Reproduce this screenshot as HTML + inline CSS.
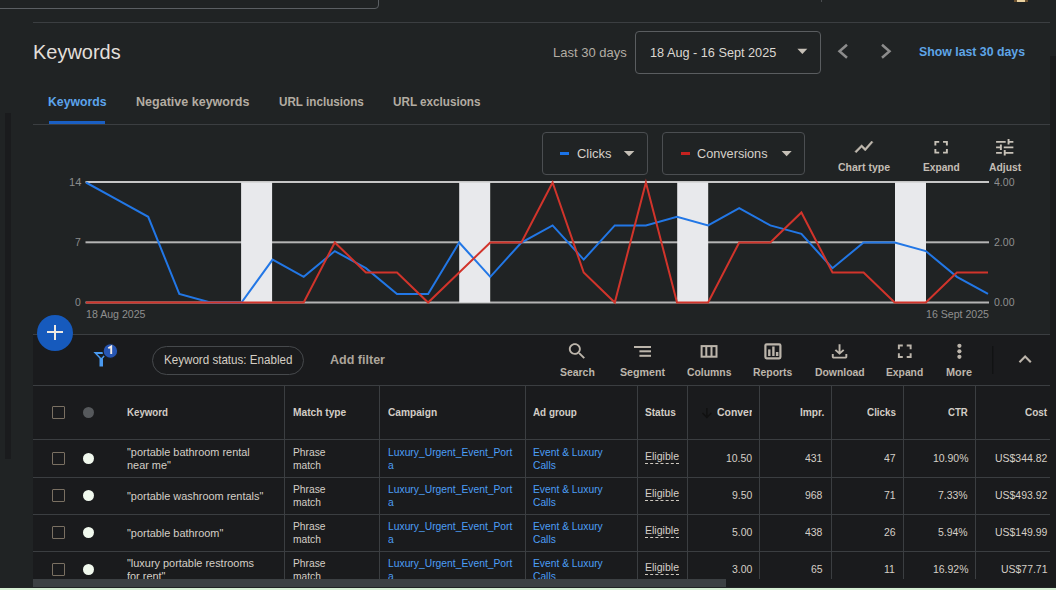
<!DOCTYPE html>
<html><head><meta charset="utf-8">
<style>
html,body{margin:0;padding:0;}
body{width:1056px;height:590px;overflow:hidden;background:#202324;position:relative;font-family:"Liberation Sans",sans-serif;}
.a{position:absolute;box-sizing:border-box;}
.t{position:absolute;white-space:nowrap;line-height:1;transform-origin:0 0;font-family:"Liberation Sans",sans-serif;}
.hl{position:absolute;height:1px;background:#3b3e41;}
.vl{position:absolute;width:1px;background:#3b3e41;}
.cb{position:absolute;width:13px;height:13px;box-sizing:border-box;border:1.4px solid #7a7062;border-radius:1px;}
.dot{position:absolute;width:11px;height:11px;border-radius:50%;background:#f1f9ee;}
.ul{position:absolute;height:1px;border-top:1px dashed #cfc9c0;}
</style></head><body>
<!-- top remnants -->
<div class="a" style="left:-10px;top:-20px;width:389px;height:29px;border:1.5px solid #5b5f63;border-radius:4px;"></div>
<div class="a" style="left:821px;top:0;width:1.2px;height:2px;background:#4a4d50;"></div>
<div class="a" style="left:1014px;top:0;width:13.5px;height:1.5px;background:#6a5030;"></div><div class="a" style="left:1016.5px;top:0;width:8px;height:2.2px;background:#ead2a0;"></div>
<div class="hl" style="left:33px;top:22px;width:1017px;background:#3b3e41;"></div>
<!-- left dark bar -->
<div class="a" style="left:4.5px;top:113px;width:6.5px;height:346px;background:#1a1b1d;"></div>
<!-- right strip -->
<div class="a" style="left:1050px;top:56px;width:6px;height:534px;background:#1a1b1c;"></div>

<!-- date box -->
<div class="a" style="left:635px;top:31px;width:186px;height:43px;border:1px solid #5a5d60;border-radius:4px;"></div>
<svg class="a" style="left:0;top:0" width="1056" height="590">
  <!-- dropdown triangle -->
  <path d="M797.4,48.8 L807.3,48.8 L802.35,54.1 Z" fill="#c6c0b7"/>
  <!-- chevrons -->
  <path d="M847,44.8 L839.5,51.3 L847,57.8" fill="none" stroke="#8c8c8c" stroke-width="2.5"/>
  <path d="M882,44.8 L889.5,51.3 L882,57.8" fill="none" stroke="#8c8c8c" stroke-width="2.5"/>
</svg>

<!-- tabs -->
<div class="a" style="left:49px;top:121px;width:56px;height:3px;background:#1a5fc3;"></div>
<div class="hl" style="left:33px;top:124px;width:1017px;"></div>

<!-- chart buttons -->
<div class="a" style="left:542px;top:132px;width:106px;height:43px;border:1px solid #4b4e51;border-radius:4px;"></div>
<div class="a" style="left:662px;top:132px;width:143px;height:43px;border:1px solid #4b4e51;border-radius:4px;"></div>
<div class="a" style="left:560px;top:152px;width:9px;height:3px;background:#1a73e8;"></div>
<div class="a" style="left:681px;top:152px;width:9px;height:3px;background:#c5221f;"></div>
<svg class="a" style="left:0;top:0" width="1056" height="590">
  <path d="M623.8,151 L634.4,151 L629.1,156.3 Z" fill="#c6c0b7"/>
  <path d="M781.6,151 L791.7,151 L786.65,156.3 Z" fill="#c6c0b7"/>
  <!-- chart type icon -->
  <path transform="translate(853.1,136) scale(0.9,0.91)" d="M3.5 18.49l6-6.01 4 4L22 6.92l-1.41-1.41-7.09 7.97-4-4L2 16.99z" fill="#c0b9af" stroke="#c0b9af" stroke-width="0.5"/>
  <path transform="translate(929.6,136.5) scale(0.96,0.9)" d="M7 14H5v5h5v-2H7v-3zm-2-4h2V7h3V5H5v5zm12 7h-3v2h5v-5h-2v3zM14 5v2h3v3h2V5h-5z" fill="#c8c2b8"/>
  <path transform="translate(993.2,136.3) scale(0.96,0.92)" d="M3 17v2h6v-2H3zM3 5v2h10V5H3zm10 16v-2h8v-2h-8v-2h-2v6h2zM7 9v2H3v2h4v2h2V9H7zm14 4v-2H11v2h10zm-6-4h2V7h4V5h-4V3h-2v6z" fill="#c8c2b8"/>
</svg>

<!-- plot -->
<svg class="a" style="left:0;top:0" width="1056" height="590">
  <rect x="85.5" y="181" width="903.5" height="2" fill="#c6c6c6"/>
  <rect x="85.5" y="241.3" width="903.5" height="2" fill="#b4b4b4"/>
  <rect x="85.5" y="301.5" width="903.5" height="2" fill="#b4b4b4"/>
  <g fill="#e8e9ec">
    <rect x="241.1" y="182.5" width="31" height="120"/>
    <rect x="459.2" y="182.5" width="31" height="120"/>
    <rect x="677.2" y="182.5" width="31" height="120"/>
    <rect x="895" y="182.5" width="31" height="120"/>
  </g>
  <polyline fill="none" stroke="#2277e6" stroke-width="2" stroke-linejoin="miter" points="86.0,182.5 117.1,199.6 148.2,216.8 179.3,293.9 210.4,302.5 241.5,302.5 272.6,259.6 303.7,276.8 334.8,251.1 365.9,268.2 397.0,293.9 428.1,293.9 459.2,242.5 490.3,276.8 521.4,242.5 552.6,225.4 583.7,259.6 614.8,225.4 645.9,225.4 677.0,216.8 708.1,225.4 739.2,208.2 770.3,225.4 801.4,233.9 832.5,268.2 863.6,242.5 894.7,242.5 925.8,251.1 956.9,276.8 988.0,293.9"/>
  <polyline fill="none" stroke="#d1342b" stroke-width="2" stroke-linejoin="miter" points="86.0,302.5 117.1,302.5 148.2,302.5 179.3,302.5 210.4,302.5 241.5,302.5 272.6,302.5 303.7,302.5 334.8,242.5 365.9,272.5 397.0,272.5 428.1,302.5 459.2,272.5 490.3,242.5 521.4,242.5 552.6,182.5 583.7,272.5 614.8,302.5 645.9,182.5 677.0,302.5 708.1,302.5 739.2,242.5 770.3,242.5 801.4,212.5 832.5,272.5 863.6,272.5 894.7,302.5 925.8,302.5 956.9,272.5 988.0,272.5"/>
</svg>

<!-- table card -->
<div class="a" style="left:33px;top:334px;width:1017px;height:254px;background:#1a1b1d;"></div>
<div class="hl" style="left:33px;top:334px;width:1017px;"></div>
<div class="hl" style="left:33px;top:385px;width:1017px;"></div>
<div class="hl" style="left:33px;top:439px;width:1017px;"></div>
<div class="hl" style="left:33px;top:477px;width:1017px;"></div>
<div class="hl" style="left:33px;top:514px;width:1017px;"></div>
<div class="hl" style="left:33px;top:551px;width:1017px;"></div>
<div class="vl" style="left:284px;top:385px;height:194px;"></div>
<div class="vl" style="left:379px;top:385px;height:194px;"></div>
<div class="vl" style="left:525px;top:385px;height:194px;"></div>
<div class="vl" style="left:637px;top:385px;height:194px;"></div>
<div class="vl" style="left:687px;top:385px;height:194px;"></div>
<div class="vl" style="left:759px;top:385px;height:194px;"></div>
<div class="vl" style="left:831px;top:385px;height:194px;"></div>
<div class="vl" style="left:903px;top:385px;height:194px;"></div>
<div class="vl" style="left:975px;top:385px;height:194px;"></div>
<!-- FAB -->
<div class="a" style="left:37px;top:315px;width:36px;height:36px;border-radius:50%;background:#165abd;"></div>
<div class="a" style="left:46.9px;top:331px;width:15.8px;height:2.3px;background:#eee9e2;"></div>
<div class="a" style="left:53.6px;top:325.2px;width:2.3px;height:14.6px;background:#eee9e2;"></div>

<!-- filter icon -->
<svg class="a" style="left:0;top:0" width="1056" height="590">
  <path d="M93.4,351.9 H109 L101.2,360.2 Z M97.3,354 L101.2,358 L105.1,354 Z" fill="#4a9af0" fill-rule="evenodd"/>
  <rect x="99.5" y="358.3" width="3.5" height="8.2" fill="#4a9af0"/>
  <circle cx="110.4" cy="351" r="7.4" fill="#2756b3" stroke="#1b1c1e" stroke-width="1.3"/>
  <path d="M108.3,348.3 L111.2,346.4 V353.9" fill="none" stroke="#f4ece6" stroke-width="1.9"/>
</svg>
<div class="a" style="left:152px;top:346px;width:152px;height:29px;border:1px solid #46494c;border-radius:15px;"></div>

<!-- toolbar icons -->
<svg class="a" style="left:0;top:0" width="1056" height="590">
  <g fill="#bcb5ab">
    <path transform="translate(566.1,340.7) scale(0.92,0.88)" d="M15.5 14h-.79l-.28-.27C15.41 12.59 16 11.11 16 9.5 16 5.91 13.09 3 9.5 3S3 5.91 3 9.5 5.91 16 9.5 16c1.61 0 3.09-.59 4.23-1.57l.27.28v.79l5 4.99L20.49 19l-4.99-5zm-6 0C7.01 14 5 11.99 5 9.5S7.01 5 9.5 5 14 7.01 14 9.5 11.99 14 9.5 14z"/>
    <rect x="634" y="346" width="17" height="2"/>
    <rect x="639.4" y="350.3" width="11.6" height="2"/>
    <rect x="639.4" y="354.8" width="11.6" height="2"/>
    <path transform="translate(827.93,361.96) scale(0.0242,0.0222)" d="M480-320 280-520l56-58 104 104v-326h80v326l104-104 56 58-200 200ZM240-160q-33 0-56.5-23.5T160-240v-120h80v120h480v-120h80v120q0 33-23.5 56.5T720-160H240Z"/>
    <path transform="translate(893,339.85) scale(0.98,0.95)" d="M7 14H5v5h5v-2H7v-3zm-2-4h2V7h3V5H5v5zm12 7h-3v2h5v-5h-2v3zM14 5v2h3v3h2V5h-5z"/>
    <path transform="translate(1012.3,346.3) scale(1.07,1.08)" d="M12 8l-6 6 1.41 1.41L12 10.83l4.59 4.58L18 14z"/>
    <rect x="768.1" y="349.4" width="2.4" height="6.6"/>
    <rect x="772.2" y="346.5" width="2.4" height="9.5"/>
    <rect x="775.9" y="352" width="2.5" height="4"/>
    <circle cx="959.4" cy="345.8" r="2.1"/>
    <circle cx="959.4" cy="351.3" r="2.1"/>
    <circle cx="959.4" cy="356.8" r="2.1"/>
  </g>
  <g stroke="#bcb5ab" fill="none" stroke-width="2">
    <rect x="701.6" y="346.1" width="14.9" height="10.6"/>
    <path d="M706.3,346 V357 M711.5,346 V357"/>
    <rect x="765.4" y="344.3" width="15" height="14" stroke-width="2.2" rx="1.2"/>
  </g>
  <rect x="992.3" y="346" width="1" height="28" fill="#0f1011"/>
</svg>

<!-- table header icons -->
<div class="cb" style="left:52px;top:406px;"></div>
<div class="a" style="left:82.7px;top:407px;width:11px;height:11px;border-radius:50%;background:#56595c;"></div>
<svg class="a" style="left:0;top:0" width="1056" height="590">
  <path d="M706.9,408 V417.5 M702.5,413 L706.9,417.5 L711.3,413" fill="none" stroke="#111" stroke-width="1.5"/>
</svg>

<!-- rows icons -->
<div class="cb" style="left:52px;top:452px;"></div>
<div class="dot" style="left:82.8px;top:453.3px;"></div>
<div class="cb" style="left:52px;top:489px;"></div>
<div class="dot" style="left:82.8px;top:490.3px;"></div>
<div class="cb" style="left:52px;top:526px;"></div>
<div class="dot" style="left:82.8px;top:527.3px;"></div>
<div class="cb" style="left:52px;top:563px;"></div>
<div class="dot" style="left:82.8px;top:564.3px;"></div>
<div class="ul" style="left:645px;top:463px;width:34px;"></div>
<div class="ul" style="left:645px;top:500px;width:34px;"></div>
<div class="ul" style="left:645px;top:537px;width:34px;"></div>
<div class="ul" style="left:645px;top:574px;width:34px;"></div>

<div class="t" style="left:32.90px;top:41.77px;font-size:20px;font-weight:400;color:#e2dfda;transform:scaleX(0.9976)">Keywords</div>
<div class="t" style="left:553.10px;top:46.14px;font-size:13.3px;font-weight:400;color:#b3ada4;transform:scaleX(0.9774)">Last 30 days</div>
<div class="t" style="left:650.30px;top:46.14px;font-size:13.3px;font-weight:400;color:#dcd8d2;transform:scaleX(0.9543)">18 Aug - 16 Sept 2025</div>
<div class="t" style="left:918.60px;top:45.04px;font-size:13.3px;font-weight:700;color:#5ea5e8;transform:scaleX(0.9253)">Show last 30 days</div>
<div class="t" style="left:47.50px;top:95.00px;font-size:13.7px;font-weight:700;color:#5ca4ec;transform:scaleX(0.8942)">Keywords</div>
<div class="t" style="left:135.50px;top:95.00px;font-size:13.7px;font-weight:700;color:#b3aca2;transform:scaleX(0.9152)">Negative keywords</div>
<div class="t" style="left:278.60px;top:95.00px;font-size:13.7px;font-weight:700;color:#b3aca2;transform:scaleX(0.8533)">URL inclusions</div>
<div class="t" style="left:392.50px;top:95.00px;font-size:13.7px;font-weight:700;color:#b3aca2;transform:scaleX(0.8542)">URL exclusions</div>
<div class="t" style="left:576.60px;top:147.10px;font-size:13px;font-weight:400;color:#d5d0c9;transform:scaleX(0.9950)">Clicks</div>
<div class="t" style="left:697.30px;top:147.10px;font-size:13px;font-weight:400;color:#d5d0c9;transform:scaleX(0.9756)">Conversions</div>
<div class="t" style="left:837.60px;top:161.87px;font-size:11.5px;font-weight:700;color:#c4beb5;transform:scaleX(0.9143)">Chart type</div>
<div class="t" style="left:922.50px;top:161.87px;font-size:11.5px;font-weight:700;color:#c4beb5;transform:scaleX(0.8857)">Expand</div>
<div class="t" style="left:988.70px;top:161.87px;font-size:11.5px;font-weight:700;color:#c4beb5;transform:scaleX(0.8999)">Adjust</div>
<div class="t" style="left:69.00px;top:176.99px;font-size:11px;font-weight:400;color:#8c8c8c;transform:scaleX(1.0122)">14</div>
<div class="t" style="left:75.20px;top:236.99px;font-size:11px;font-weight:400;color:#8c8c8c;transform:scaleX(0.9469)">7</div>
<div class="t" style="left:75.20px;top:296.89px;font-size:11px;font-weight:400;color:#8c8c8c;transform:scaleX(0.9469)">0</div>
<div class="t" style="left:993.50px;top:176.99px;font-size:11px;font-weight:400;color:#8f8f8f;transform:scaleX(0.9570)">4.00</div>
<div class="t" style="left:993.50px;top:236.99px;font-size:11px;font-weight:400;color:#8f8f8f;transform:scaleX(0.9570)">2.00</div>
<div class="t" style="left:993.50px;top:296.89px;font-size:11px;font-weight:400;color:#8f8f8f;transform:scaleX(0.9570)">0.00</div>
<div class="t" style="left:86.00px;top:309.29px;font-size:11px;font-weight:400;color:#8f8f8f;transform:scaleX(0.9628)">18 Aug 2025</div>
<div class="t" style="left:925.80px;top:309.29px;font-size:11px;font-weight:400;color:#8f8f8f;transform:scaleX(0.9625)">16 Sept 2025</div>
<div class="t" style="left:163.90px;top:353.40px;font-size:13px;font-weight:400;color:#d5cec4;transform:scaleX(0.8928)">Keyword status: Enabled</div>
<div class="t" style="left:329.70px;top:353.40px;font-size:13px;font-weight:700;color:#aca59b;transform:scaleX(0.9639)">Add filter</div>
<div class="t" style="left:559.50px;top:365.78px;font-size:11.6px;font-weight:700;color:#bdb6ac;transform:scaleX(0.8999)">Search</div>
<div class="t" style="left:619.80px;top:365.78px;font-size:11.6px;font-weight:700;color:#bdb6ac;transform:scaleX(0.9190)">Segment</div>
<div class="t" style="left:686.60px;top:365.78px;font-size:11.6px;font-weight:700;color:#bdb6ac;transform:scaleX(0.8970)">Columns</div>
<div class="t" style="left:752.90px;top:365.78px;font-size:11.6px;font-weight:700;color:#bdb6ac;transform:scaleX(0.8970)">Reports</div>
<div class="t" style="left:814.50px;top:365.78px;font-size:11.6px;font-weight:700;color:#bdb6ac;transform:scaleX(0.8973)">Download</div>
<div class="t" style="left:886.00px;top:365.78px;font-size:11.6px;font-weight:700;color:#bdb6ac;transform:scaleX(0.8884)">Expand</div>
<div class="t" style="left:946.00px;top:365.78px;font-size:11.6px;font-weight:700;color:#bdb6ac;transform:scaleX(0.9385)">More</div>
<div class="t" style="left:126.70px;top:406.97px;font-size:11.5px;font-weight:700;color:#d2cdc6;transform:scaleX(0.8440)">Keyword</div>
<div class="t" style="left:292.80px;top:406.97px;font-size:11.5px;font-weight:700;color:#d2cdc6;transform:scaleX(0.8855)">Match type</div>
<div class="t" style="left:387.50px;top:406.97px;font-size:11.5px;font-weight:700;color:#d2cdc6;transform:scaleX(0.8832)">Campaign</div>
<div class="t" style="left:533.30px;top:406.97px;font-size:11.5px;font-weight:700;color:#d2cdc6;transform:scaleX(0.8570)">Ad group</div>
<div class="t" style="left:645.00px;top:406.97px;font-size:11.5px;font-weight:700;color:#d2cdc6;transform:scaleX(0.8789)">Status</div>
<div class="t" style="left:717.00px;top:406.97px;font-size:11.5px;font-weight:700;color:#d2cdc6;transform:scaleX(0.9085)">Conver</div>
<div class="t" style="left:799.50px;top:406.97px;font-size:11.5px;font-weight:700;color:#d2cdc6;transform:scaleX(0.8841)">Impr.</div>
<div class="t" style="left:866.80px;top:406.97px;font-size:11.5px;font-weight:700;color:#d2cdc6;transform:scaleX(0.8586)">Clicks</div>
<div class="t" style="left:948.20px;top:406.97px;font-size:11.5px;font-weight:700;color:#d2cdc6;transform:scaleX(0.8375)">CTR</div>
<div class="t" style="left:1024.80px;top:406.97px;font-size:11.5px;font-weight:700;color:#d2cdc6;transform:scaleX(0.8685)">Cost</div>
<div class="t" style="left:126.60px;top:447.32px;font-size:11.2px;font-weight:400;color:#d5cfc7;transform:scaleX(0.9750)">"portable bathroom rental</div>
<div class="t" style="left:126.60px;top:460.12px;font-size:11.2px;font-weight:400;color:#d5cfc7;transform:scaleX(0.9750)">near me"</div>
<div class="t" style="left:293.00px;top:447.12px;font-size:11.2px;font-weight:400;color:#d5cfc7;transform:scaleX(0.9167)">Phrase</div>
<div class="t" style="left:293.00px;top:460.12px;font-size:11.2px;font-weight:400;color:#d5cfc7;transform:scaleX(0.9160)">match</div>
<div class="t" style="left:387.60px;top:447.12px;font-size:11.2px;font-weight:400;color:#4c9ef6;transform:scaleX(0.9218)">Luxury_Urgent_Event_Port</div>
<div class="t" style="left:387.60px;top:460.12px;font-size:11.2px;font-weight:400;color:#4c9ef6;transform:scaleX(0.9200)">a</div>
<div class="t" style="left:533.30px;top:447.12px;font-size:11.2px;font-weight:400;color:#4c9ef6;transform:scaleX(0.9186)">Event &amp; Luxury</div>
<div class="t" style="left:533.30px;top:460.12px;font-size:11.2px;font-weight:400;color:#4c9ef6;transform:scaleX(0.9170)">Calls</div>
<div class="t" style="left:645.20px;top:451.32px;font-size:11.2px;font-weight:400;color:#d5cfc7;transform:scaleX(0.9424)">Eligible</div>
<div class="t" style="left:725.84px;top:453.13px;font-size:11.3px;font-weight:400;color:#d5cfc7;transform:scaleX(0.9250)">10.50</div>
<div class="t" style="left:805.36px;top:453.13px;font-size:11.3px;font-weight:400;color:#d5cfc7;transform:scaleX(0.9250)">431</div>
<div class="t" style="left:883.67px;top:453.13px;font-size:11.3px;font-weight:400;color:#d5cfc7;transform:scaleX(0.9250)">47</div>
<div class="t" style="left:932.55px;top:453.13px;font-size:11.3px;font-weight:400;color:#d5cfc7;transform:scaleX(0.9250)">10.90%</div>
<div class="t" style="left:994.71px;top:453.13px;font-size:11.3px;font-weight:400;color:#d5cfc7;transform:scaleX(0.9250)">US$344.82</div>
<div class="t" style="left:126.60px;top:490.72px;font-size:11.2px;font-weight:400;color:#d5cfc7;transform:scaleX(0.9750)">"portable washroom rentals"</div>
<div class="t" style="left:293.00px;top:484.12px;font-size:11.2px;font-weight:400;color:#d5cfc7;transform:scaleX(0.9167)">Phrase</div>
<div class="t" style="left:293.00px;top:497.12px;font-size:11.2px;font-weight:400;color:#d5cfc7;transform:scaleX(0.9160)">match</div>
<div class="t" style="left:387.60px;top:484.12px;font-size:11.2px;font-weight:400;color:#4c9ef6;transform:scaleX(0.9218)">Luxury_Urgent_Event_Port</div>
<div class="t" style="left:387.60px;top:497.12px;font-size:11.2px;font-weight:400;color:#4c9ef6;transform:scaleX(0.9200)">a</div>
<div class="t" style="left:533.30px;top:484.12px;font-size:11.2px;font-weight:400;color:#4c9ef6;transform:scaleX(0.9186)">Event &amp; Luxury</div>
<div class="t" style="left:533.30px;top:497.12px;font-size:11.2px;font-weight:400;color:#4c9ef6;transform:scaleX(0.9170)">Calls</div>
<div class="t" style="left:645.20px;top:488.32px;font-size:11.2px;font-weight:400;color:#d5cfc7;transform:scaleX(0.9424)">Eligible</div>
<div class="t" style="left:731.65px;top:490.13px;font-size:11.3px;font-weight:400;color:#d5cfc7;transform:scaleX(0.9250)">9.50</div>
<div class="t" style="left:805.36px;top:490.13px;font-size:11.3px;font-weight:400;color:#d5cfc7;transform:scaleX(0.9250)">968</div>
<div class="t" style="left:883.67px;top:490.13px;font-size:11.3px;font-weight:400;color:#d5cfc7;transform:scaleX(0.9250)">71</div>
<div class="t" style="left:938.36px;top:490.13px;font-size:11.3px;font-weight:400;color:#d5cfc7;transform:scaleX(0.9250)">7.33%</div>
<div class="t" style="left:994.71px;top:490.13px;font-size:11.3px;font-weight:400;color:#d5cfc7;transform:scaleX(0.9250)">US$493.92</div>
<div class="t" style="left:126.60px;top:527.72px;font-size:11.2px;font-weight:400;color:#d5cfc7;transform:scaleX(0.9750)">"portable bathroom"</div>
<div class="t" style="left:293.00px;top:521.12px;font-size:11.2px;font-weight:400;color:#d5cfc7;transform:scaleX(0.9167)">Phrase</div>
<div class="t" style="left:293.00px;top:534.12px;font-size:11.2px;font-weight:400;color:#d5cfc7;transform:scaleX(0.9160)">match</div>
<div class="t" style="left:387.60px;top:521.12px;font-size:11.2px;font-weight:400;color:#4c9ef6;transform:scaleX(0.9218)">Luxury_Urgent_Event_Port</div>
<div class="t" style="left:387.60px;top:534.12px;font-size:11.2px;font-weight:400;color:#4c9ef6;transform:scaleX(0.9200)">a</div>
<div class="t" style="left:533.30px;top:521.12px;font-size:11.2px;font-weight:400;color:#4c9ef6;transform:scaleX(0.9186)">Event &amp; Luxury</div>
<div class="t" style="left:533.30px;top:534.12px;font-size:11.2px;font-weight:400;color:#4c9ef6;transform:scaleX(0.9170)">Calls</div>
<div class="t" style="left:645.20px;top:525.32px;font-size:11.2px;font-weight:400;color:#d5cfc7;transform:scaleX(0.9424)">Eligible</div>
<div class="t" style="left:731.65px;top:527.13px;font-size:11.3px;font-weight:400;color:#d5cfc7;transform:scaleX(0.9250)">5.00</div>
<div class="t" style="left:805.36px;top:527.13px;font-size:11.3px;font-weight:400;color:#d5cfc7;transform:scaleX(0.9250)">438</div>
<div class="t" style="left:883.67px;top:527.13px;font-size:11.3px;font-weight:400;color:#d5cfc7;transform:scaleX(0.9250)">26</div>
<div class="t" style="left:938.36px;top:527.13px;font-size:11.3px;font-weight:400;color:#d5cfc7;transform:scaleX(0.9250)">5.94%</div>
<div class="t" style="left:994.71px;top:527.13px;font-size:11.3px;font-weight:400;color:#d5cfc7;transform:scaleX(0.9250)">US$149.99</div>
<div class="t" style="left:126.60px;top:558.32px;font-size:11.2px;font-weight:400;color:#d5cfc7;transform:scaleX(0.9750)">"luxury portable restrooms</div>
<div class="t" style="left:126.60px;top:571.12px;font-size:11.2px;font-weight:400;color:#d5cfc7;transform:scaleX(0.9750)">for rent"</div>
<div class="t" style="left:293.00px;top:558.12px;font-size:11.2px;font-weight:400;color:#d5cfc7;transform:scaleX(0.9167)">Phrase</div>
<div class="t" style="left:293.00px;top:571.12px;font-size:11.2px;font-weight:400;color:#d5cfc7;transform:scaleX(0.9160)">match</div>
<div class="t" style="left:387.60px;top:558.12px;font-size:11.2px;font-weight:400;color:#4c9ef6;transform:scaleX(0.9218)">Luxury_Urgent_Event_Port</div>
<div class="t" style="left:387.60px;top:571.12px;font-size:11.2px;font-weight:400;color:#4c9ef6;transform:scaleX(0.9200)">a</div>
<div class="t" style="left:533.30px;top:558.12px;font-size:11.2px;font-weight:400;color:#4c9ef6;transform:scaleX(0.9186)">Event &amp; Luxury</div>
<div class="t" style="left:533.30px;top:571.12px;font-size:11.2px;font-weight:400;color:#4c9ef6;transform:scaleX(0.9170)">Calls</div>
<div class="t" style="left:645.20px;top:562.32px;font-size:11.2px;font-weight:400;color:#d5cfc7;transform:scaleX(0.9424)">Eligible</div>
<div class="t" style="left:731.65px;top:564.13px;font-size:11.3px;font-weight:400;color:#d5cfc7;transform:scaleX(0.9250)">3.00</div>
<div class="t" style="left:811.17px;top:564.13px;font-size:11.3px;font-weight:400;color:#d5cfc7;transform:scaleX(0.9250)">65</div>
<div class="t" style="left:884.45px;top:564.13px;font-size:11.3px;font-weight:400;color:#d5cfc7;transform:scaleX(0.9250)">11</div>
<div class="t" style="left:932.55px;top:564.13px;font-size:11.3px;font-weight:400;color:#d5cfc7;transform:scaleX(0.9250)">16.92%</div>
<div class="t" style="left:1000.52px;top:564.13px;font-size:11.3px;font-weight:400;color:#d5cfc7;transform:scaleX(0.9250)">US$77.71</div>
<div class="a" style="left:752px;top:400px;width:7px;height:30px;background:#1a1b1d;"></div>
<!-- scrollbar -->
<div class="a" style="left:33px;top:579px;width:693px;height:8px;background:#3c4043;"></div>
<div class="a" style="left:0;top:587px;width:1056px;height:1px;background:#202224;"></div>
<div class="a" style="left:0;top:588px;width:1056px;height:2px;background:#d7f0d5;"></div>

</body></html>
